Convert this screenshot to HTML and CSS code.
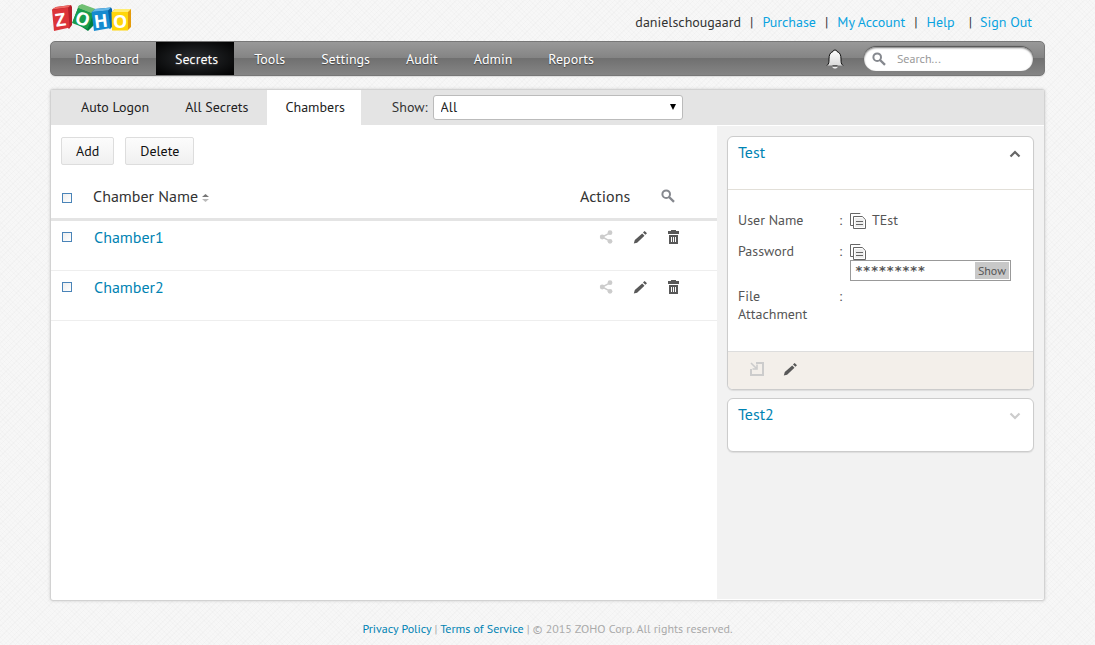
FILE: index.html
```html
<!DOCTYPE html>
<html lang="en">
<head>
<meta charset="utf-8">
<meta name="viewport" content="width=device-width, initial-scale=1">
<title>Zoho Vault - Chambers</title>
<link rel="stylesheet" href="styles.css">
</head>
<body>
<svg class="sprite" aria-hidden="true">
  <symbol id="search" viewBox="0 0 14 14"><circle cx="5.2" cy="5.2" r="3.8" fill="none" stroke="#85888e" stroke-width="2"/><path d="M8 8l5 4.800" stroke="#85888e" stroke-width="2.4"/></symbol>
  <symbol id="share" viewBox="0 0 14 14"><path d="M11 2.8L3.2 7 11 11.2" fill="none" stroke="#ccc" stroke-width="1.5"/><circle cx="3.2" cy="7" r="2.4" fill="#ccc"/><circle cx="11" cy="2.7" r="2.4" fill="#ccc"/><circle cx="11" cy="11.3" r="2.4" fill="#ccc"/></symbol>
  <symbol id="pencil" viewBox="0 0 14 14"><path d="M.8 13.6l1-3.500L9.200 3.400l2.300 2.300-7.400 7zM10 2.500L11.600.9 14 3.300l-1.600 1.500z" fill="#585858"/></symbol>
  <symbol id="trash" viewBox="0 0 14 14"><path d="M1 1h3V0h5v1h3v3H1zM2 5h9v9H2z" fill="#585858"/><path d="M4.500 7v5M6.500 7v5M8.500 7v5" stroke="#fff" stroke-width="1"/></symbol>
  <symbol id="copy" viewBox="0 0 17 17"><path d="M10 1V.5H.5v12h3" fill="none" stroke="#666"/><path d="M3.500 3.500h8.800l3.200 3.200v8.800h-12z" fill="#fff" stroke="#666"/><path d="M5 5h7l2 2v7H5z" fill="#eee"/><path d="M6 8.500h7M6 11.500h7" stroke="#666"/></symbol>
</svg>
<div class="page">
  <header class="top">
    <svg class="logo" viewBox="0 0 82 30" role="img" aria-label="Zoho">
      <path d="M1 5.5L5 3l15-2 1 2 0 18-3 4z" fill="#b41f29"/><path d="M1 5.5L5 3l15-2-3 2.5z" fill="#ef6a64"/>
      <path d="M1 6l16-2.5 1.6 20L3 27z" fill="#dc3439"/>
      <path d="M22 17l6-15.5L45 8l-2 13-6 6z" fill="#007d3c"/><path d="M28 1.500l3-1.500L46 5.500 42 10 26.500 4z" fill="#70bf72"/>
      <path d="M27 4l15.500 6L36.500 25 21 19z" fill="#189b4c"/>
      <path d="M41 8l3-3 16-1.500 1 1.500 1 17-3 3z" fill="#0762a6"/><path d="M41 8l3-3 16-1.500-3 3z" fill="#64b8e8"/>
      <path d="M40.500 8L57 6.500 59.500 24 43 27z" fill="#168bd0"/>
      <path d="M61 8l3-3h16v18l-3 3z" fill="#e49b0b"/><path d="M61 8l3-3h16l-3 3z" fill="#ffed72"/>
      <path d="M60.500 8H77v18.500H61z" fill="#ffd60a"/>
      <g class="logo-letters">
        <text transform="translate(10.500 22) rotate(-8)">Z</text>
        <text transform="translate(29.500 21) rotate(20)">O</text>
        <text transform="translate(50.500 23.500) rotate(-7)">H</text>
        <text transform="translate(69 24)">O</text>
      </g>
    </svg>
    <nav class="account" aria-label="Account">
      <span>danielschougaard</span><i>|</i><a href="#">Purchase</a><i>|</i><a href="#">My Account</a><i>|</i><a href="#">Help</a><i class="wide">|</i><a href="#">Sign Out</a>
    </nav>
  </header>

  <div class="bar">
    <nav class="menu" aria-label="Main">
      <a href="#">Dashboard</a><a href="#" class="on" aria-current="page">Secrets</a><a href="#">Tools</a><a href="#">Settings</a><a href="#">Audit</a><a href="#">Admin</a><a href="#">Reports</a>
    </nav>
    <button class="icon bell" aria-label="Notifications">
      <svg viewBox="0 0 18 20"><defs><linearGradient id="bell" x2="0" y2="1"><stop stop-color="#fff"/><stop offset="1" stop-color="#d9d9d9"/></linearGradient></defs><path d="M6.500 17h5v1.500L10 19.500H8L6.500 18.500z" fill="#eee"/><path d="M1 16.500c2-2 2-3 2-6.500 0-4 1-6.500 4-7.500Q7 1 9 1t2 1.500c3 1 4 3.500 4 7.500 0 3.500 0 4.500 2 6.500z" fill="url(#bell)"/><path d="M1 16.500c2-2 2-3 2-6.500 0-4 1-6.500 4-7.500Q7 1 9 1t2 1.500c3 1 4 3.500 4 7.500 0 3.500 0 4.500 2 6.500" fill="none" stroke="#111"/><path d="M6.500 17h5" stroke="#111"/></svg>
    </button>
    <label class="find"><svg class="i14"><use href="#search"/></svg><input type="search" placeholder="Search..." aria-label="Search"></label>
  </div>

  <main class="panel">
    <div class="tabs">
      <a href="#">Auto Logon</a><a href="#">All Secrets</a><a href="#" class="on" aria-current="page">Chambers</a>
      <label class="show" for="show">Show:</label>
      <span class="pick"><select id="show"><option>All</option></select></span>
    </div>
    <div class="content">
      <section class="list">
        <div class="buttons"><button class="btn">Add</button><button class="btn">Delete</button></div>
        <table class="chambers">
          <thead>
            <tr>
              <th class="tick"><input type="checkbox" aria-label="Select all"></th>
              <th>Chamber Name <svg class="sort" viewBox="0 0 7 8" aria-hidden="true"><path d="M0 3L3.500 0 7 3z" fill="#777"/><path d="M0 5h7L3.500 8z" fill="#bbb"/></svg></th>
              <th class="acts"><div class="acts-head">Actions<button class="icon" aria-label="Search chambers"><svg class="i14"><use href="#search"/></svg></button></div></th>
            </tr>
          </thead>
          <tbody>
            <tr>
              <td class="tick"><input type="checkbox" aria-label="Select Chamber1"></td>
              <td><a href="#">Chamber1</a></td>
              <td class="acts"><div class="acts-row"><button class="icon" aria-label="Share"><svg class="i14"><use href="#share"/></svg></button><button class="icon" aria-label="Edit"><svg class="i14"><use href="#pencil"/></svg></button><button class="icon" aria-label="Delete"><svg class="i14"><use href="#trash"/></svg></button></div></td>
            </tr>
            <tr>
              <td class="tick"><input type="checkbox" aria-label="Select Chamber2"></td>
              <td><a href="#">Chamber2</a></td>
              <td class="acts"><div class="acts-row"><button class="icon" aria-label="Share"><svg class="i14"><use href="#share"/></svg></button><button class="icon" aria-label="Edit"><svg class="i14"><use href="#pencil"/></svg></button><button class="icon" aria-label="Delete"><svg class="i14"><use href="#trash"/></svg></button></div></td>
            </tr>
          </tbody>
        </table>
      </section>
      <aside class="side">
        <article class="card">
          <header class="card-head"><a href="#">Test</a><button class="icon" aria-label="Collapse"><svg class="chev" viewBox="0 0 12 8"><path d="M1.500 6.500L6 2l4.500 4.500" fill="none" stroke="#666" stroke-width="2.200"/></svg></button></header>
          <div class="fields">
            <span class="name">User Name</span><span>:</span><div class="value"><button class="icon" aria-label="Copy user name"><svg class="copy"><use href="#copy"/></svg></button>TEst</div>
            <label class="name" for="pw">Password</label><span>:</span><div><div class="value"><button class="icon" aria-label="Copy password"><svg class="copy"><use href="#copy"/></svg></button></div><div class="secret"><input id="pw" type="text" value="*********" readonly><button>Show</button></div></div>
            <span class="name">File Attachment</span><span>:</span><span></span>
          </div>
          <footer class="card-foot">
            <button class="icon" aria-label="Open"><svg class="i14" viewBox="0 0 14 14"><path d="M6 1h7v12H1V7" fill="none" stroke="#ccc" stroke-width="2"/><path d="M1 1l5 5M7 2.500V7H2.500" fill="none" stroke="#ccc" stroke-width="1.600"/></svg></button>
            <button class="icon" aria-label="Edit"><svg class="i14"><use href="#pencil"/></svg></button>
          </footer>
        </article>
        <article class="card">
          <header class="card-head"><a href="#">Test2</a><button class="icon" aria-label="Expand"><svg class="chev" viewBox="0 0 12 8"><path d="M1.500 1.500L6 6l4.500-4.500" fill="none" stroke="#ccc" stroke-width="2.200"/></svg></button></header>
        </article>
      </aside>
    </div>
  </main>
  <footer class="foot"><a href="#">Privacy Policy</a> | <a href="#">Terms of Service</a> | © 2015 ZOHO Corp. All rights reserved.</footer>
</div>
</body>
</html>
```
FILE: styles.css
```css
* { box-sizing: border-box; }
body {
  margin: 0;
  font: 14px/18px "PT Sans", "Noto Sans", sans-serif;
  color: #333;
  background-color: #f7f7f7;
  background-image:
    repeating-linear-gradient(45deg, #0000 0 2px, #00000003 2px 3px),
    repeating-linear-gradient(-45deg, #0000 0 3px, #00000004 3px 4px);
}
a { color: #0083b3; text-decoration: none; }
button, input, select { font: inherit; }
.sprite { display: none; }
.icon { display: flex; padding: 0; border: 0; background: none; cursor: pointer; }
.i14 { display: block; width: 14px; height: 14px; }

.page { display: flex; flex-direction: column; min-height: 100vh; padding: 0 50px; }
.top { display: flex; justify-content: space-between; height: 41px; padding: 4px 13px 0 1px; }
.logo { width: 82px; height: 30px; }
.logo-letters { fill: #fff; font: bold 18px "Noto Sans", sans-serif; text-anchor: middle; }
.account { display: flex; padding-top: 9px; }
.account i { padding: 0 9px; font-style: normal; }
.account .wide { padding: 0 8px 0 14px; }
.account a { color: #0aa3e0; }

.bar {
  display: flex;
  align-items: center;
  height: 35px;
  padding: 0 11px 0 6px;
  border: 1px solid #777;
  border-radius: 5px;
  background: linear-gradient(#999, #838383 50%, #707070 50%, #858585);
  box-shadow: 0 1px 1px #ddd;
}
.menu { display: flex; flex: 1; align-self: stretch; }
.menu a { padding: 0 18px; color: #fff; line-height: 34px; text-shadow: 0 1px 1px #444; }
.menu .on { margin: 0 2px 0 -1px; padding: 0 16px 0 19px; background: radial-gradient(#2a2d30, #000); }
.bell { margin-right: 20px; }
.bell svg { width: 18px; height: 20px; }
.find {
  display: flex;
  align-items: center;
  gap: 11px;
  width: 169px;
  height: 24px;
  padding: 0 8px;
  border-radius: 12px;
  background: #fff;
  box-shadow: inset 0 1px 2px #777, 0 -1px 1px #555;
}
.find .i14 { flex: none; }
.find input { width: 100%; min-width: 0; padding: 0; border: 0; outline: 0; background: none; font-size: 12px; }
.find input::placeholder { color: #999; }

.panel {
  display: flex;
  flex: 1;
  flex-direction: column;
  margin-top: 13px;
  border: 1px solid #d2d2d2;
  border-radius: 3px;
  background: #fff;
  box-shadow: 0 0 3px #ccc;
}
.tabs { display: flex; padding-left: 12px; background: #e4e4e4; line-height: 35px; }
.tabs a { padding: 0 18px; color: #222; }
.tabs .on { padding: 0 16px 0 19px; background: #fff; }
.show { padding: 0 5px 0 31px; }
.pick { display: flex; position: relative; align-self: center; width: 250px; }
.pick select {
  width: 100%;
  height: 25px;
  padding: 0 7px 2px;
  border: 1px solid #bbb;
  border-radius: 3px;
  appearance: none;
  background: #fff;
  color: #222;
  line-height: 20px;
}
.pick::after {
  position: absolute;
  top: 9px;
  right: 7px;
  border: 3px solid transparent;
  border-top: 6px solid #000;
  border-bottom: 0;
  content: "";
}
.content { display: flex; flex: 1; }
.list { flex: 1; min-width: 0; }
.buttons { display: flex; gap: 11px; padding: 12px 10px 11px; }
.btn {
  height: 28px;
  padding: 0 14px;
  border: 1px solid #ddd;
  border-radius: 2px;
  background: linear-gradient(#fcfcfc, #f0f0f0);
  color: #111;
}
.chambers { width: 100%; border-spacing: 0; font-size: 16px; line-height: 16px; }
.chambers th { height: 45px; padding: 0 0 2px; border-bottom: 3px solid #e4e4e4; font-weight: normal; text-align: left; }
.chambers td { height: 50px; padding: 8px 0 0 1px; border-bottom: 1px solid #eee; vertical-align: top; }
.chambers .tick { width: 42px; padding-left: 11px; }
.tick input { display: block; width: 10px; height: 10px; margin: 0; border: 1px solid #4a84b8; appearance: none; background: linear-gradient(135deg, #eee, #fff); }
.tick input:checked { background: #4a84b8; }
.tick input { margin-top: 3px; }
.sort { width: 7px; height: 8px; }
.chambers .acts { width: 137px; }
.acts-head { display: flex; align-items: center; gap: 31px; }
.acts-row { display: flex; gap: 20px; padding: 1px 0 0 18px; }

.side { display: flex; flex-direction: column; gap: 8px; width: 327px; margin: 1px 0; padding: 10px; background: #f2f2f2; }
.card { overflow: hidden; flex: none; border: 1px solid #ccc; border-radius: 6px; background: #fff; box-shadow: 0 1px 1px #ddd; }
.card-head { display: flex; align-items: flex-start; justify-content: space-between; height: 52px; padding: 7px 12px 0 10px; font-size: 16px; line-height: 16px; }
.chev { width: 12px; height: 8px; margin-top: 6px; }
.fields {
  display: grid;
  grid-template-columns: 101px 11px 1fr;
  row-gap: 6px;
  padding: 21px 10px 28px;
  border-top: 1px solid #e2dfd8;
  color: #555;
}
.fields > * { min-height: 25px; }
.fields .name { padding-right: 20px; }
.value { display: flex; gap: 5px; height: 18px; }
.copy { width: 17px; height: 17px; margin-top: 2px; }
.secret { display: flex; width: 161px; height: 21px; padding: 1px; border: 1px solid #999; }
.secret input { flex: 1; min-width: 0; padding: 0 0 0 3px; border: 0; outline: 0; color: #555; font: bold 13px "DejaVu Sans Mono", monospace; }
.secret button { padding: 0 3px; border: 0; background: #c8c8c8; color: #555; font-size: 12px; line-height: 17px; }
.card-foot { display: flex; align-items: center; gap: 19px; height: 38px; padding: 0 22px 3px; border-top: 1px solid #ddd; background: #f3efea; }
.foot { padding: 19px 0 7px; color: #aaa; font-size: 12px; text-align: center; }
```
